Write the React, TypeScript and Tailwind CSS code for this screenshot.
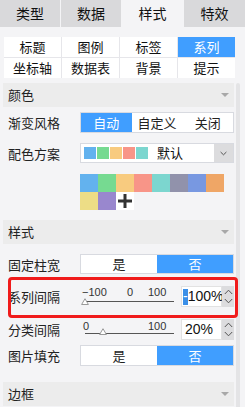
import clsx from "clsx";

const TABS = ["类型", "数据", "样式", "特效"];
const SUB_TABS = ["标题", "图例", "标签", "系列", "坐标轴", "数据表", "背景", "提示"];
const PALETTE = [
  "#63b2ee",
  "#76da91",
  "#f8cb7f",
  "#f89588",
  "#7cd6cf",
  "#9192ab",
  "#7898e1",
  "#efa666",
  "#eddd86",
  "#9987ce",
];

function SectionHeader({ title }: { title: string }) {
  return (
    <div className="flex h-[24px] items-center justify-between bg-[#ececec] pl-[5px] pr-[5px] text-[13px] text-[#222]">
      <span>{title}</span>
      <span className="h-0 w-0 border-x-[4px] border-t-[4px] border-x-transparent border-t-[#a8a8a8]" />
    </div>
  );
}

function Row({ label, children, className }: { label: string; children: React.ReactNode; className?: string }) {
  return (
    <div className={clsx("flex items-center", className)}>
      <div className="w-[77px] shrink-0 pl-[5px] text-[13px] leading-none text-[#222]">{label}</div>
      {children}
    </div>
  );
}

function Segmented({ options, active }: { options: string[]; active: number }) {
  return (
    <div className="flex h-full w-[154px] border border-[#d8dae0] bg-white text-[13px]">
      {options.map((o, i) => (
        <div
          key={o}
          className={clsx(
            "flex flex-1 items-center justify-center",
            i === active ? "bg-[#409eff] text-white" : "text-[#222]"
          )}
        >
          {o}
        </div>
      ))}
    </div>
  );
}

function Thumb({ className }: { className: string }) {
  return (
    <svg className={clsx("absolute", className)} width="8" height="7" viewBox="0 0 8 7">
      <polygon points="4,0.7 7.4,6.5 0.6,6.5" fill="#fff" stroke="#9a9a9a" strokeWidth="1" />
    </svg>
  );
}

function Chevron({ up }: { up?: boolean }) {
  return (
    <svg width="9" height="6" viewBox="0 0 9 6">
      <polyline
        points={up ? "0.8,5 4.5,1.2 8.2,5" : "0.8,1 4.5,4.8 8.2,1"}
        fill="none"
        stroke="#555"
        strokeWidth="1"
      />
    </svg>
  );
}

function NumberInput({ children }: { children: React.ReactNode }) {
  return (
    <div className="ml-[6px] flex h-[21px]">
      <div className="flex w-[41px] items-center border border-[#e2e2e2] bg-white pl-[1px] font-['Liberation_Sans',sans-serif] text-[14px] text-[#111]">
        {children}
      </div>
      <div className="flex w-[12px] flex-col items-center justify-around bg-[#dcdcde] py-[1px]">
        <Chevron up />
        <Chevron />
      </div>
    </div>
  );
}

export default function App() {
  return (
    <div className="h-[407px] w-[245px] overflow-hidden bg-[#f4f4f6] font-['Noto_Sans_CJK_SC',sans-serif]">
      <div className="grid h-[27px] grid-cols-[60px_60px_61px_1fr] gap-px text-[14px] text-[#111]">
        {TABS.map((t, i) => (
          <div
            key={t}
            className={clsx("flex items-center justify-center", i === 2 ? "bg-[#f4f4f6]" : "bg-[#d9d9db]")}
          >
            {t}
          </div>
        ))}
      </div>

      <div className="ml-[4px] mt-[10px] grid w-[231px] grid-cols-4 gap-px bg-[#e6e6ea] text-[13px]">
        {SUB_TABS.map((t, i) => (
          <div
            key={t}
            className={clsx(
              "flex h-[20px] items-center justify-center",
              i === 3 ? "bg-[#409eff] text-white" : "bg-white text-[#111]"
            )}
          >
            {t}
          </div>
        ))}
      </div>

      <div className="mt-[5px] flex h-[400px]">
        <div className="ml-[3px] w-[231px] shrink-0">
          <SectionHeader title="颜色" />

          <Row label="渐变风格" className="mt-[5px] h-[21px]">
            <Segmented options={["自动", "自定义", "关闭"]} active={0} />
          </Row>

          <Row label="配色方案" className="mt-[10px] h-[20px]">
            <div className="flex h-full w-[154px] border border-[#d8dae0] bg-white">
              <div className="flex items-center gap-px pl-[3px]">
                {PALETTE.slice(0, 5).map((c) => (
                  <span key={c} className="h-[12px] w-[12px]" style={{ backgroundColor: c }} />
                ))}
              </div>
              <div className="flex flex-1 items-center pl-[9px] text-[13px] text-[#111]">默认</div>
              <div className="flex w-[19px] items-center justify-center bg-[#dcdcde]">
                <svg width="7" height="5" viewBox="0 0 7 5">
                  <polyline points="0.6,1 3.5,3.8 6.4,1" fill="none" stroke="#555" strokeWidth="1" />
                </svg>
              </div>
            </div>
          </Row>

          <div className="ml-[77px] mt-[11px] grid w-[144px] grid-cols-8">
            {PALETTE.map((c) => (
              <span key={c} className="h-[18px] w-[18px]" style={{ backgroundColor: c }} />
            ))}
            <span className="flex h-[18px] w-[18px] items-center justify-center bg-white">
              <svg width="14" height="14" viewBox="0 0 14 14">
                <rect x="5.5" y="0" width="3" height="14" fill="#333" />
                <rect x="0" y="5.5" width="14" height="3" fill="#333" />
              </svg>
            </span>
          </div>

          <div className="mt-[10px]">
            <SectionHeader title="样式" />
          </div>

          <Row label="固定柱宽" className="mt-[10px] h-[20px]">
            <Segmented options={["是", "否"]} active={1} />
          </Row>

          <div className="relative mt-[3px] h-[41px] pt-[9px]">
            <Row label="系列间隔" className="h-[21px]">
              <div className="relative h-full w-[95px] font-['Liberation_Sans',sans-serif] text-[11px] leading-[13px] text-[#333]">
                <span className="absolute left-[2px] top-0">−100</span>
                <span className="absolute left-[47px] top-0">0</span>
                <span className="absolute left-[68px] top-0">100</span>
                <span className="absolute left-[5px] top-[15px] h-px w-[89px] bg-[#555]" />
                <Thumb className="left-[1px] top-[12px]" />
              </div>
              <NumberInput>
                <span className="h-[15px] w-px bg-[#111]" />
                <span className="flex h-[16px] w-[5px] items-center bg-[#3b8fe8] text-white">-</span>
                <span>100%</span>
              </NumberInput>
            </Row>
            <div className="absolute left-[5px] top-0 h-[41px] w-[230px] rounded-[4px] border-[3px] border-[#f01b1b]" />
          </div>

          <Row label="分类间隔" className="mt-[1px] h-[21px]">
            <div className="relative h-full w-[95px] font-['Liberation_Sans',sans-serif] text-[11px] leading-[13px] text-[#333]">
              <span className="absolute left-[3px] top-[1px]">0</span>
              <span className="absolute left-[68px] top-[1px]">100</span>
              <span className="absolute left-[5px] top-[14px] h-px w-[89px] bg-[#555]" />
              <Thumb className="left-[19px] top-[9px]" />
            </div>
            <NumberInput>
              <span className="pl-[2px]">20%</span>
            </NumberInput>
          </Row>

          <Row label="图片填充" className="mt-[5px] h-[21px]">
            <Segmented options={["是", "否"]} active={1} />
          </Row>

          <div className="mt-[16px]">
            <SectionHeader title="边框" />
          </div>
        </div>
        <div className="ml-[2px] h-full w-[4px] rounded-t-[2px] bg-[#e4e4e6]" />
      </div>
    </div>
  );
}
